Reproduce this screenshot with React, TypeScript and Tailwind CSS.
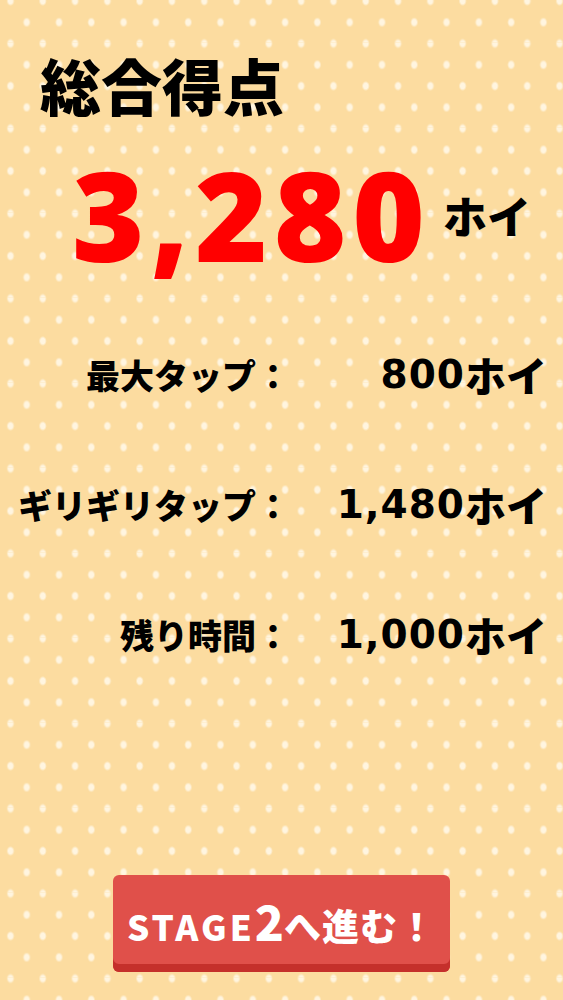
import React from "react";

const jp = "font-['Noto_Sans_CJK_JP','Noto_Sans',sans-serif]";

function Row({ label, num }: { label: string; num: string }) {
  return (
    <div className="grid grid-cols-[290px_1fr] items-center">
      <div className="text-right text-[34px] font-black leading-none text-black">{label}</div>
      <div className="flex items-center justify-end leading-none text-black">
        <span className="block font-['DejaVu_Sans',sans-serif] text-[39px] font-bold leading-none tracking-[1px]">{num}</span>
        <span className="block text-[41px] font-black leading-none">ホイ</span>
      </div>
    </div>
  );
}

export default function App() {
  return (
    <div
      className={`${jp} relative flex h-[1000px] w-full flex-col overflow-hidden bg-[#fcdca0] [background-image:radial-gradient(ellipse_4px_5px_at_10.5px_1px,#fff5e0_55%,transparent_100%),radial-gradient(ellipse_4px_5px_at_26.7px_22.3px,#fff5e0_55%,transparent_100%),radial-gradient(ellipse_4px_5px_at_10.5px_43.5px,#fff5e0_55%,transparent_100%)] [background-size:32.3px_42.5px]`}
    >
      <div className="pl-[40px] pt-[54px] text-[61px] font-black leading-none text-black">総合得点</div>

      <div className="mt-[37px] flex items-center pl-[72px]">
        <span className="block font-['Noto_Sans',sans-serif] text-[124px] font-black leading-none tracking-[6px] text-[#ff0000]">3,280</span>
        <span className="ml-[12px] mt-[2px] block text-[44px] font-black leading-none text-black">ホイ</span>
      </div>

      <div className="mt-[78px] flex flex-col gap-[89px] pr-[16px]">
        <Row label="最大タップ：" num="800" />
        <Row label="ギリギリタップ：" num="1,480" />
        <Row label="残り時間：" num="1,000" />
      </div>

      <div className="mt-auto mb-[28px] flex justify-center">
        <button className="flex h-[97px] w-[337px] items-center justify-center rounded-[6px] bg-[#e0504a] pb-[8px] text-white shadow-[inset_0_-8px_0_#c5302b]">
          <span className="flex items-baseline font-black leading-none">
            <span className="block text-[35px] leading-none tracking-[3px]">STAGE</span>
            <span className="block text-[48px] leading-none">2</span>
            <span className="block text-[37px] leading-none tracking-[1px]">へ進む！</span>
          </span>
        </button>
      </div>
    </div>
  );
}
